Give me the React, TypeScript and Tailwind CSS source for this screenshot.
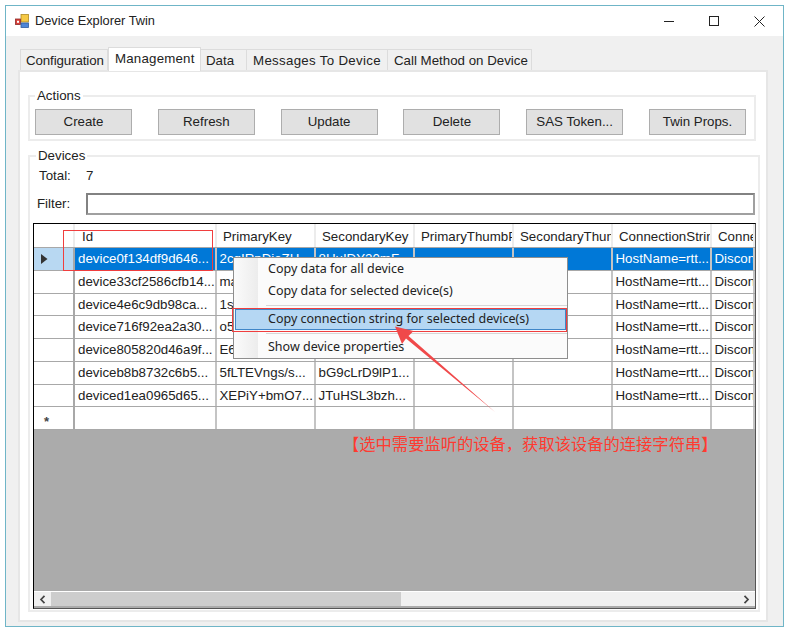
const sans = "font-['Liberation_Sans',Arial,sans-serif]";

const tabs = [
  { label: "Configuration", cls: "w-[88px] pl-[5px] border-l tracking-[-0.1px]", active: false },
  { label: "Management", cls: "w-[93px] pl-[6px] tracking-[0.2px]", active: true },
  { label: "Data", cls: "w-[46px] pl-[5px]", active: false },
  { label: "Messages To Device", cls: "w-[141px] pl-[6px] tracking-[0.3px]", active: false },
  { label: "Call Method on Device", cls: "w-[144px] pl-[6px]", active: false },
];

const buttons = ["Create", "Refresh", "Update", "Delete", "SAS Token...", "Twin Props."];

const headers = ["Id", "PrimaryKey", "SecondaryKey", "PrimaryThumbPrint", "SecondaryThumbPrint", "ConnectionString", "ConnectionState"];

const rows = [
  ["device0f134df9d646...", "2cqIRpDjeZH...", "8HuIDY20mF...", "", "", "HostName=rtt...", "Disconnected"],
  ["device33cf2586cfb14...", "mabcdEfgh...", "aB3dEfGhI...", "", "", "HostName=rtt...", "Disconnected"],
  ["device4e6c9db98ca...", "1sKjh3Lmn...", "tR5yUiOp...", "", "", "HostName=rtt...", "Disconnected"],
  ["device716f92ea2a30...", "o5TgHnMk...", "Wq2ErTyU...", "", "", "HostName=rtt...", "Disconnected"],
  ["device805820d46a9f...", "E6xZcVbN...", "Lk9JhGfD...", "", "", "HostName=rtt...", "Disconnected"],
  ["deviceb8b8732c6b5...", "5fLTEVngs/s...", "bG9cLrD9lP1...", "", "", "HostName=rtt...", "Disconnected"],
  ["deviced1ea0965d65...", "XEPiY+bmO7...", "JTuHSL3bzh...", "", "", "HostName=rtt...", "Disconnected"],
  ["", "", "", "", "", "", ""],
];

const gridCols = "grid grid-cols-[41px_142px_99px_99px_99px_99px_99px_43px]";

function AppIcon() {
  return (
    <svg width="14" height="14" viewBox="0 0 14 14">
      <rect x="6" y="0.5" width="7.5" height="7.5" fill="#f6c945" stroke="#b08a22" strokeWidth="0.8" />
      <rect x="0.5" y="5" width="5" height="5.5" fill="#d8403a" stroke="#8f2a26" strokeWidth="0.8" />
      <rect x="6" y="9" width="7.5" height="4.5" fill="#4f86d8" stroke="#2e5c9e" strokeWidth="0.8" />
      <rect x="2" y="6.8" width="2" height="2" fill="#fff" />
    </svg>
  );
}

function WindowControls() {
  return (
    <div className="flex items-center gap-[35px] mr-[18px]">
      <svg width="10" height="10" viewBox="0 0 10 10">
        <path d="M0 5.5H10" stroke="#222" strokeWidth="1" />
      </svg>
      <svg width="10" height="10" viewBox="0 0 10 10">
        <rect x="0.5" y="0.5" width="9" height="9" fill="none" stroke="#222" strokeWidth="1" />
      </svg>
      <svg width="11" height="11" viewBox="0 0 11 11">
        <path d="M0.5 0.5L10.5 10.5M10.5 0.5L0.5 10.5" stroke="#222" strokeWidth="1" />
      </svg>
    </div>
  );
}

function DataGrid() {
  return (
    <div className="mt-[8px] ml-[-1px] w-[723px] h-[386px] border-[1.5px] border-black border-r-[#555] border-b-[#555] bg-[#ababab] flex flex-col text-[13.3px] text-[#222] overflow-hidden">
      <div className={`${gridCols} h-[23px] shrink-0 bg-white`}>
        <div className="border-r-2 border-[#ececec]" />
        {headers.map((h, i) => (
          <div
            key={h}
            className={`border-r-2 border-[#ececec] overflow-hidden whitespace-nowrap pt-[3px] ${i === 0 ? "pl-[7px]" : "pl-[6px]"}`}
          >
            {h}
          </div>
        ))}
      </div>
      {rows.map((row, r) => (
        <div key={r} className={`${gridCols} h-[22.75px] shrink-0 border-t border-[#a8a8a8] bg-white`}>
          <div
            className={`flex items-center border-r-2 border-[#a8a8a8] ${r === 0 ? "bg-[#b8d8f2] pl-[7px]" : "bg-white"} ${r === 7 ? "pl-[10px] pt-[6px]" : ""}`}
          >
            {r === 0 && (
              <svg width="7" height="10" viewBox="0 0 7 10">
                <path d="M0 0L6.5 5L0 10Z" fill="#333" />
              </svg>
            )}
            {r === 7 && <span className="text-[13px] leading-none text-[#444] font-bold">*</span>}
          </div>
          {row.map((c, i) => (
            <div
              key={i}
              className={`overflow-hidden whitespace-nowrap leading-[22px] border-r-2 border-[#c4c4c4] ${i === 0 ? "pl-[3px]" : "pl-[2.5px]"} ${r === 0 ? "bg-[#0078d7] text-white" : ""}`}
            >
              {c}
            </div>
          ))}
        </div>
      ))}
      <div className="flex-1 border-t border-[#a8a8a8]" />
      <div className="h-[15px] shrink-0 mb-[2px] bg-[#f0f0f0] flex items-center border-t border-white">
        <div className="w-[17px] flex justify-center">
          <svg width="7" height="9" viewBox="0 0 7 9">
            <path d="M5.5 0.8L2 4.5L5.5 8.2" fill="none" stroke="#444" strokeWidth="1.7" />
          </svg>
        </div>
        <div className="w-[350px] h-full bg-[#cdcdcd]" />
        <div className="flex-1" />
        <div className="w-[17px] flex justify-center">
          <svg width="7" height="9" viewBox="0 0 7 9">
            <path d="M1.5 0.8L5 4.5L1.5 8.2" fill="none" stroke="#444" strokeWidth="1.7" />
          </svg>
        </div>
      </div>
    </div>
  );
}

function ContextMenu() {
  const item = "h-[22px] pl-[34px] flex items-center";
  return (
    <div className="absolute left-[233px] top-[257px] w-[335px] h-[102px] bg-[#fbfbfb] border border-[#8e8e8e] text-[12.5px] text-[#222] font-['Noto_Sans',sans-serif] z-10">
      <div className="absolute left-0 top-0 bottom-0 w-[24px] bg-gradient-to-r from-[#fbfbfb] to-[#ececec]" />
      <div className="relative">
        <div className={item}>Copy data for all device</div>
        <div className={item}>Copy data for selected device(s)</div>
        <div className="ml-[32px] h-px bg-[#d7d7d7] mt-[3px]" />
        <div className="h-[21px] mt-[3px] mx-px pl-[32px] flex items-center bg-[#b5d7f3] border border-[#3f86c8]">
          Copy connection string for selected device(s)
        </div>
        <div className="ml-[32px] h-px bg-[#d7d7d7] mt-[3px]" />
        <div className={`${item} mt-[2px]`}>Show device properties</div>
      </div>
    </div>
  );
}

function Annotations() {
  return (
    <>
      <div className="absolute left-[63px] top-[230px] w-[150px] h-[41px] border border-[#f03e3e] z-20" />
      <div className="absolute left-[232px] top-[308px] w-[335px] h-[24px] border border-[#f03e3e] z-20" />
      <svg className="absolute left-[385px] top-[318px] z-20" width="120" height="100" viewBox="0 0 120 100">
        <path d="M10 8.5L28.5 13L23.5 18L110 94L21 20.5L17 26Z" fill="#f0494a" />
      </svg>
      <div className="absolute left-[343px] top-[432px] whitespace-nowrap text-[16.3px] leading-[22px] text-[#ff3a30] font-['Noto_Sans_CJK_SC',sans-serif] z-20">
        【选中需要监听的设备，获取该设备的连接字符串】
      </div>
    </>
  );
}

export default function App() {
  return (
    <div className={`relative w-[804px] h-[629px] bg-white pl-[5px] pt-[5px] overflow-hidden ${sans} text-[13.3px] text-[#222]`}>
      <div className="w-[779px] h-[622px] border border-[#6fb5c7] flex flex-col">
        <div className="h-[30px] shrink-0 bg-white flex items-center justify-between">
          <div className="flex items-center gap-[6px] pl-[9px] text-[12.8px]">
            <AppIcon />
            <span>Device Explorer Twin</span>
          </div>
          <WindowControls />
        </div>
        <div className="flex-1 bg-[#f0f0f0] pl-[12px] pt-[11px] flex flex-col">
          <div className="flex items-end h-[23px] ml-[2px] relative z-[1]">
            {tabs.map((t) => (
              <div
                key={t.label}
                className={`${t.cls} whitespace-nowrap border-[#dcdcdc] border-t border-r ${
                  t.active
                    ? "h-[24px] bg-white border-l mb-[-1px] leading-[21px]"
                    : "h-[21px] bg-[#f0f0f0] leading-[21px]"
                }`}
              >
                {t.label}
              </div>
            ))}
          </div>
          <div className="w-[750px] h-[552px] bg-white border-2 border-[#e6e6e6] pl-[8px] pt-[16px]">
            <fieldset className="w-[728px] h-[53px] border-2 border-[#ececec] pl-[5px] pr-[8px]">
              <legend className="px-[2px] leading-[15px]">Actions</legend>
              <div className="flex justify-between mt-[6px]">
                {buttons.map((b) => (
                  <div
                    key={b}
                    className="w-[97px] h-[26px] bg-[#e1e1e1] border border-[#adadad] flex items-center justify-center"
                  >
                    {b}
                  </div>
                ))}
              </div>
            </fieldset>
            <fieldset className="mt-[7px] w-[732px] h-[464px] border-2 border-[#ececec] pl-[4px]">
              <legend className="ml-[2px] px-[2px] leading-[15px]">Devices</legend>
              <div className="flex pl-[5px] mt-[5px] h-[16px] items-center">
                <span className="w-[47px]">Total:</span>
                <span>7</span>
              </div>
              <div className="flex items-center mt-[9px] pl-[3px]">
                <span className="w-[49px]">Filter:</span>
                <div className="w-[669px] h-[22px] bg-white border-2 border-[#a0a0a0] border-t-[#828282] border-l-[#828282]" />
              </div>
              <DataGrid />
            </fieldset>
          </div>
        </div>
      </div>
      <ContextMenu />
      <Annotations />
    </div>
  );
}
